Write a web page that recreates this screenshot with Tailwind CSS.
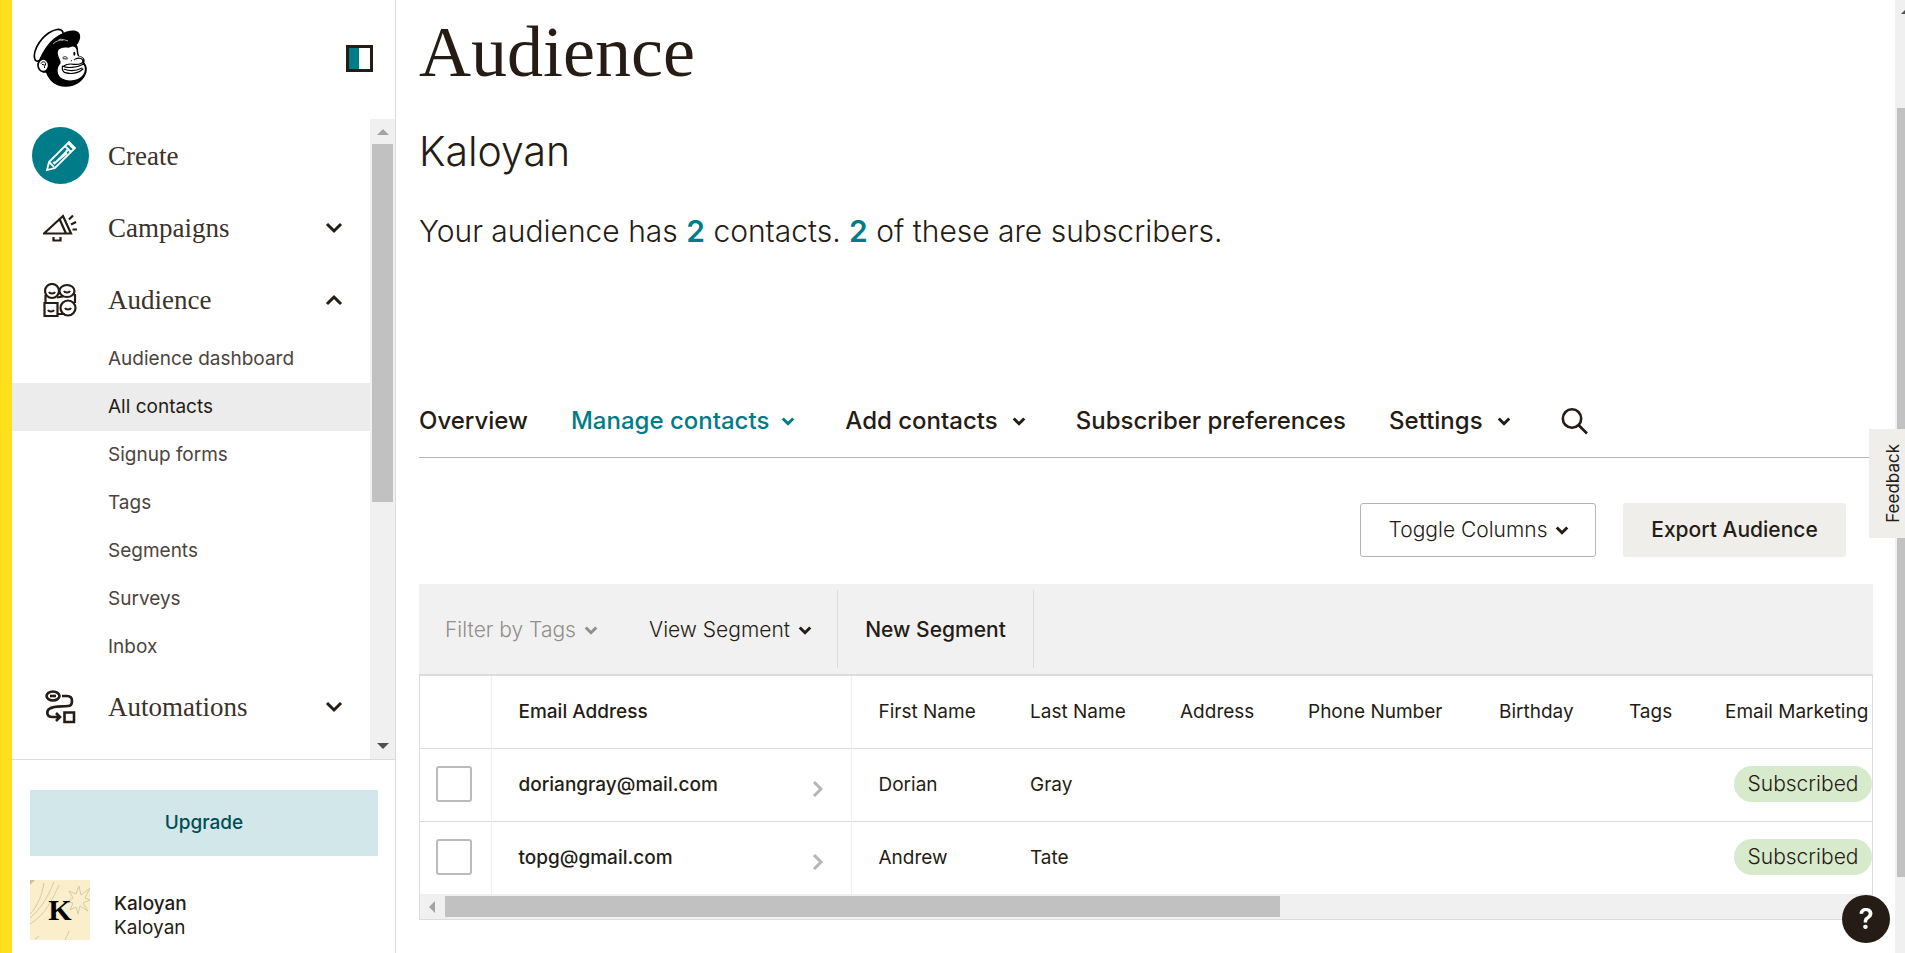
<!DOCTYPE html>
<html lang="en">
<head>
<meta charset="utf-8">
<title>Audience</title>
<script src="https://cdn.jsdelivr.net/npm/@tailwindcss/browser@4"></script>
</head>
<body class="bg-white text-[#241c15] font-['Inter','Liberation_Sans',sans-serif] font-normal text-[19px] leading-6">
<svg class="hidden">
  <symbol id="chev" viewBox="0 0 18 12"><path d="M2 2l7 7 7-7" fill="none" stroke="currentColor" stroke-width="3"/></symbol>
  <symbol id="chev-bold" viewBox="0 0 18 12"><path d="M2 2l7 7 7-7" fill="none" stroke="currentColor" stroke-width="4"/></symbol>
</svg>
<div class="flex h-screen overflow-hidden">
  <div class="w-3 shrink-0 bg-[#ffe01b]"></div>

  <aside class="flex w-96 shrink-0 flex-col border-r border-[#dcdcdc]">
    <div class="flex h-[119px] shrink-0 items-center justify-between pb-[3px] pl-5 pr-[22px]">
      <a href="#" aria-label="Home">
        <svg class="h-[60px] w-14" viewBox="36 24 168 180">
          <path d="M57 118C66 92 84 66 112 60c32-8 55 2 60 18 4 10 1 22 6 30 12 2 19 10 15 20 9 10 10 24 3 38-12 24-36 35-60 34-28-1-48-16-58-42-10 2-20-6-24-18Z" fill="#000"/>
          <path d="M46 121C35 100 56 60 86 39c18-12 36-15 42-4l2 8C100 52 77 82 60 119c-4 5-11 6-14 2Z" fill="#fff" stroke="#000" stroke-width="5"/>
          <path d="M128 40c16-9 36-11 46-4 9 6 8 20 2 30-2 5-5 9-8 9-12-11-30-13-50-10-10 2-18 6-26 12 8-18 22-30 36-37Z" fill="#000"/>
          <path d="M99 72c10-9 20-13 31-11M116 59c12-3 18 1 28 4" fill="none" stroke="#fff" stroke-width="2"/>
          <path d="M114 103c-3-14 6-20 18-20 8-1 13 2 18-1 8-5 17-3 19 6 2 8 1 15 5 21 10 1 18 6 15 14l-3 6c9 8 12 21 4 34-14 22-52 24-70 8-11-14-8-30 1-40 4-8-6-16-7-28Z" fill="#fff"/>
          <path d="M128 139c14 6 41 5 64-7M127 138c-1 10 1 17 8 20 19 5 39 2 54-11M133 148c15 5 35 5 53-4M166 117c12-6 25-1 22 9-4 7-14 8-26 7-12-2-22-1-30 4" fill="none" stroke="#000" stroke-width="3.4" stroke-linecap="round"/>
          <path d="M128 113c5-5 12-4 15 2M130 116l11 1" fill="none" stroke="#000" stroke-width="2.6" stroke-linecap="round"/>
          <ellipse cx="163" cy="101" rx="3" ry="6" fill="#000"/>
          <circle cx="154" cy="122" r="1.8"/><circle cx="163" cy="119" r="1.8"/>
          <ellipse cx="70" cy="136" rx="16" ry="19" fill="#fff" stroke="#000" stroke-width="5"/>
          <path d="M63 131c3-8 14-7 14 1 0 5-6 6-3 12M66 133l8 2" fill="none" stroke="#000" stroke-width="3"/>
        </svg>
      </a>
      <button aria-label="Collapse navigation" class="flex size-[27px] border-3 border-[#241c15]"><span class="h-full w-[10px] bg-[#007c89]"></span></button>
    </div>

    <div class="flex min-h-0 flex-1">
      <nav class="min-w-0 flex-1 overflow-hidden text-[#4c443d]">
        <a href="#" class="flex h-[73px] items-center pl-5 font-['Liberation_Serif',serif] text-[27px] text-[#3a322b]">
          <span class="mr-[19px] flex size-[57px] items-center justify-center rounded-full bg-[#007c89]">
            <svg class="size-8" viewBox="0 0 32 32" fill="none" stroke="#fff" stroke-width="1.800"><path d="M2 30l2-8L24 2l6 6L10 28zM20 6l6 6M23 3l6 6M9 24L22 11l-1-1M4 22l5 5M8 23l2-1M11 22l11-9"/></svg>
          </span>Create</a>
        <button class="flex h-[72px] w-full items-center pl-[31px] pr-[27px] font-['Liberation_Serif',serif] text-[27px] text-[#3a322b]">
          <svg class="mr-[31px] h-7 w-[34px]" viewBox="0 0 34 28" fill="none" stroke="#241c15" stroke-width="2.2"><path d="M1 19.500L20 2l8 17.500zM16.500 5l6.500 14.500M10.500 23v3.500h7V23M26 5.500l4-4M28 10.500l5-2.500M29.500 15.500H34"/></svg>
          Campaigns<svg class="ml-auto h-3 w-[18px] text-[#241c15]"><use href="#chev"/></svg></button>
        <button class="flex h-[71px] w-full items-center pl-[31px] pr-[27px] font-['Liberation_Serif',serif] text-[27px] text-[#3a322b]">
          <svg class="mr-[31px] size-[34px]" viewBox="0 0 34 34" fill="none" stroke="#241c15" stroke-width="2.2"><circle cx="9" cy="8" r="7"/><ellipse cx="24" cy="8" rx="7.500" ry="6"/><path d="M1.500 20h13v13h-13zM2.500 12v8M32 11v9M15 31h7M14 14.500l6-1"/><circle cx="25" cy="25" r="7.500"/><path d="M6 9c1 2 5 2 6 0M21 8c1 2 5 2 6 0M5 27c1 2 5 2 6 0M22 25c1 2 5 2 6 0"/></svg>
          Audience<svg class="ml-auto h-3 w-[18px] rotate-180 text-[#241c15]"><use href="#chev"/></svg></button>
        <ul>
          <li><a href="#" class="flex h-12 items-center pl-24">Audience dashboard</a></li>
          <li><a href="#" class="flex h-12 items-center bg-[#ececec] pl-24 text-[#241c15]">All contacts</a></li>
          <li><a href="#" class="flex h-12 items-center pl-24">Signup forms</a></li>
          <li><a href="#" class="flex h-12 items-center pl-24">Tags</a></li>
          <li><a href="#" class="flex h-12 items-center pl-24">Segments</a></li>
          <li><a href="#" class="flex h-12 items-center pl-24">Surveys</a></li>
          <li><a href="#" class="flex h-12 items-center pl-24">Inbox</a></li>
        </ul>
        <button class="flex h-[72px] w-full items-center pl-[31px] pr-[27px] font-['Liberation_Serif',serif] text-[27px] text-[#3a322b]">
          <svg class="mr-[31px] size-[34px]" viewBox="0 0 34 34" fill="none" stroke="#241c15" stroke-width="2.600"><ellipse cx="10" cy="6" rx="6.500" ry="4.500"/><path d="M19 6h5c4 0 5 2 5 5s-1 5-4 5c-6 1-13-1-19 3-3 3-2 8 3 8h7M13 23l4 4-4 4M21.500 22.500h9.500v9.500h-9.500z"/><path d="M7 6h6"/></svg>
          Automations<svg class="ml-auto h-3 w-[18px] text-[#241c15]"><use href="#chev"/></svg></button>
      </nav>
      <div class="flex w-[25px] shrink-0 flex-col items-center bg-[#f0f0f0]" aria-hidden="true">
        <svg class="h-[25px] w-3 shrink-0" viewBox="0 0 12 25"><path d="M0 16l6-6 6 6z" fill="#a3a3a3"/></svg>
        <div class="h-[358px] w-[21px] shrink-0 bg-[#c1c1c1]"></div>
        <svg class="mt-auto h-[25px] w-3 shrink-0" viewBox="0 0 12 25"><path d="M0 9l6 6 6-6z" fill="#505050"/></svg>
      </div>
    </div>

    <div class="shrink-0 border-t border-[#dcdcdc] pb-[13px] pl-[18px] pr-[17px] pt-[30px]">
      <button class="h-[66px] w-full bg-[#d2e7ea] font-medium text-[#004e56]">Upgrade</button>
      <div class="mt-6 flex">
        <div class="relative flex size-[60px] shrink-0 items-center justify-center overflow-hidden bg-[#fbeeca] font-['Liberation_Serif',serif] text-[30px] font-bold text-black">
          <svg class="absolute inset-0 size-full" viewBox="0 0 60 60" fill="none" stroke="#d5cba8" stroke-width="1"><path d="M0 38C12 28 18 16 24 2M0 44C16 34 22 20 29 5M0 34C8 26 12 14 14 3M35 60c1-4 3-5 4-9M5 59l4-3"/><path d="M49 6l2 9 9-7-5 10 5 2-7 3 5 8-8-5-2 8-2-7-6 3 3-7-6-1 6-4-4-7 7 3z"/><path d="M0 0h5L0 5z" fill="#cdbf99" stroke="none"/></svg>
          <span class="relative">K</span>
        </div>
        <p class="ml-6 mt-3 leading-6 text-[#241c15]"><span class="block font-medium">Kaloyan</span><span class="block">Kaloyan</span></p>
      </div>
    </div>
  </aside>

  <main class="min-w-0 flex-1 pl-[23px] pr-[22px]">
    <h1 class="pt-2 font-['Liberation_Serif',serif] text-[72px] leading-[88px]">Audience</h1>
    <h2 class="mt-[27px] text-[41px] font-light leading-[56px]">Kaloyan</h2>
    <p class="mt-8 text-[30px] font-light leading-10">Your audience has <a href="#" class="font-semibold text-[#007c89]">2</a> contacts. <a href="#" class="font-semibold text-[#007c89]">2</a> of these are subscribers.</p>

    <nav class="mt-[134px] flex h-[73px] items-center border-b border-[#b5b5b5] text-[24px] font-medium leading-8">
      <a href="#">Overview</a>
      <button class="ml-[43px] flex items-center text-[#007c89]">Manage contacts<svg class="ml-3 h-[9px] w-[14px]"><use href="#chev-bold"/></svg></button>
      <button class="ml-[50px] flex items-center">Add contacts<svg class="ml-[14px] h-[9px] w-[14px]"><use href="#chev-bold"/></svg></button>
      <a href="#" class="ml-[50px]">Subscriber preferences</a>
      <button class="ml-[43px] flex items-center">Settings<svg class="ml-[14px] h-[9px] w-[14px]"><use href="#chev-bold"/></svg></button>
      <button class="ml-[50px]" aria-label="Search"><svg class="size-[27px]" viewBox="0 0 27 27" fill="none" stroke="currentColor" stroke-width="2.600"><circle cx="11" cy="10.500" r="9.200"/><path d="M17.500 17L26 25.500"/></svg></button>
    </nav>

    <div class="mt-[45px] flex justify-end gap-[27px] pr-[27px] text-[21px]">
      <button class="flex h-[54px] w-[236px] items-center justify-center rounded-[3px] border border-[#b5b5b5] pl-[2px] font-light">Toggle Columns<svg class="ml-2 h-[9px] w-[14px]"><use href="#chev-bold"/></svg></button>
      <button class="h-[54px] w-[223px] rounded-[3px] bg-[#efeeea] font-medium">Export Audience</button>
    </div>

    <div class="mt-[27px] flex h-[92px] items-center border-b-2 border-[#dcdcdc] bg-[#f1f1f1] text-[21px]">
      <button class="flex w-[203px] items-center pl-[26px] pt-[2px] font-light text-[#928e8a]">Filter by Tags<svg class="ml-2 h-[9px] w-[14px]"><use href="#chev-bold"/></svg></button>
      <button class="flex h-[78px] w-[216px] items-center border-r border-[#dcdcdc] pl-[27px] pt-[2px] font-light">View Segment<svg class="ml-2 h-[9px] w-[14px]"><use href="#chev-bold"/></svg></button>
      <button class="h-[78px] w-[196px] border-r border-[#dcdcdc] pt-[2px] font-medium">New Segment</button>
    </div>

    <div class="overflow-hidden border border-t-0 border-[#dcdcdc]">
      <table class="w-[1700px] table-fixed border-collapse text-left">
        <colgroup><col class="w-[71px]"><col class="w-[360px]"><col class="w-[152px]"><col class="w-[150px]"><col class="w-[128px]"><col class="w-[191px]"><col class="w-[130px]"><col class="w-24"><col></colgroup>
        <thead>
          <tr class="h-[72px] border-b border-[#dcdcdc] whitespace-nowrap">
            <td class="border-r border-[#f0f0f0]"></td>
            <th class="border-r border-[#f0f0f0] pl-[27px] font-medium">Email Address</th>
            <th class="pl-[27px] font-normal">First Name</th><th class="pl-[27px] font-normal">Last Name</th><th class="pl-[27px] font-normal">Address</th><th class="pl-[27px] font-normal">Phone Number</th><th class="pl-[27px] font-normal">Birthday</th><th class="pl-[27px] font-normal">Tags</th><th class="pl-[27px] font-normal">Email Marketing</th>
          </tr>
        </thead>
        <tbody>
          <tr class="h-[73px] border-b border-[#dcdcdc]">
            <td class="border-r border-[#f0f0f0] pb-[2px] pl-4"><input type="checkbox" aria-label="Select doriangray@mail.com" class="block size-9 appearance-none rounded-[3px] border-2 border-[#bdbbb9] bg-white"></td>
            <td class="border-r border-[#f0f0f0] pl-[27px] pr-7"><a href="#" class="flex items-center justify-between font-medium">doriangray@mail.com<svg class="mt-2 h-4 w-[11px]" viewBox="0 0 11 16"><path d="M2 1l7 7-7 7" fill="none" stroke="#b5b5b5" stroke-width="3"/></svg></a></td>
            <td class="pl-[27px]">Dorian</td><td class="pl-[27px]">Gray</td><td></td><td></td><td></td><td></td>
            <td class="pb-[2px] pl-9"><span class="flex h-9 w-[138px] items-center justify-center rounded-full bg-[#d8eacc] text-[21px] font-light">Subscribed</span></td>
          </tr>
          <tr class="h-[73px]">
            <td class="border-r border-[#f0f0f0] pb-[2px] pl-4"><input type="checkbox" aria-label="Select topg@gmail.com" class="block size-9 appearance-none rounded-[3px] border-2 border-[#bdbbb9] bg-white"></td>
            <td class="border-r border-[#f0f0f0] pl-[27px] pr-7"><a href="#" class="flex items-center justify-between font-medium">topg@gmail.com<svg class="mt-2 h-4 w-[11px]" viewBox="0 0 11 16"><path d="M2 1l7 7-7 7" fill="none" stroke="#b5b5b5" stroke-width="3"/></svg></a></td>
            <td class="pl-[27px]">Andrew</td><td class="pl-[27px]">Tate</td><td></td><td></td><td></td><td></td>
            <td class="pb-[2px] pl-9"><span class="flex h-9 w-[138px] items-center justify-center rounded-full bg-[#d8eacc] text-[21px] font-light">Subscribed</span></td>
          </tr>
        </tbody>
      </table>
      <div class="flex h-[25px] items-center bg-[#f0f0f0]" aria-hidden="true">
        <svg class="h-3 w-[25px]" viewBox="0 0 25 12"><path d="M15 0l-6 6 6 6z" fill="#a3a3a3"/></svg>
        <div class="h-[21px] w-[835px] bg-[#c1c1c1]"></div>
      </div>
    </div>
  </main>

  <div class="w-[10px] shrink-0 overflow-hidden bg-[#f0f0f0] pl-[2px]" aria-hidden="true">
    <svg class="block h-[108px] w-5 max-w-none" viewBox="0 0 20 108"><path d="M4 14l6-6 6 6z" fill="#505050"/></svg>
    <div class="h-[769px] bg-[#c1c1c1]"></div>
  </div>
</div>

<button class="fixed right-0 top-[429px] flex h-[109px] w-9 items-center justify-center bg-[#efeeea] pl-3 text-[17px]"><span class="rotate-180 [writing-mode:vertical-rl]">Feedback</span></button>
<button aria-label="Help" class="fixed bottom-[10px] right-[15px] size-12 rounded-full bg-[#241c15] text-[28px] font-semibold text-white">?</button>
</body>
</html>
